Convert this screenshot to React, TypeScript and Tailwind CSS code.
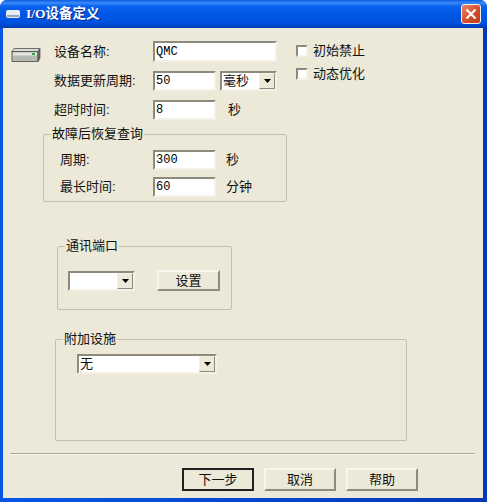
import type { ReactNode } from "react";

const ui = "font-['Liberation_Sans','Noto_Sans_CJK_SC',sans-serif] text-[13px] leading-[14px] text-[#111]";
const mono = "font-['Liberation_Mono','Noto_Sans_CJK_SC',monospace] text-[12px] leading-[14px] text-black";
const sunken = "border-2 border-t-[#8d8b7e] border-l-[#8d8b7e] border-r-[#f4f2e8] border-b-[#f4f2e8] bg-white";

function Field({ value, width, height = 20 }: { value?: string; width: number; height?: number }) {
  return (
    <div className={`${sunken} ${mono} flex items-center pl-px`} style={{ width, height }}>
      {value}
    </div>
  );
}

function Combo({ value, width }: { value?: string; width: number }) {
  return (
    <div className={`${sunken} ${ui} flex h-5 items-center justify-between pl-px`} style={{ width }}>
      <span>{value}</span>
      <span className="flex h-4 w-4 items-center justify-center border border-t-[#f4f2e8] border-l-[#f4f2e8] border-r-[#8d8b7e] border-b-[#8d8b7e] bg-[#ece9d8]">
        <svg width="7" height="4" viewBox="0 0 7 4">
          <path d="M0 0h7L3.5 4z" fill="#000" />
        </svg>
      </span>
    </div>
  );
}

function Btn({ label, width, height = 23, active }: { label: string; width: number; height?: number; active?: boolean }) {
  return (
    <div
      className={`${ui} flex items-center justify-center ${
        active
          ? "border-2 border-t-[#222] border-l-[#222] border-r-[#222] border-b-[#222] bg-[#ece9d8]"
          : "border-2 border-t-[#f7f5ec] border-l-[#f7f5ec] border-r-[#8d8b7e] border-b-[#8d8b7e] bg-[#ece9d8]"
      }`}
      style={{ width, height }}
    >
      {label}
    </div>
  );
}

function Group({ title, className, children }: { title: string; className: string; children: ReactNode }) {
  return (
    <div className={`rounded-[2px] border border-[#c4c1ab] ${className}`}>
      <div className={`${ui} -mt-[8px] ml-[7px] h-[14px] w-fit bg-[#ece9d8] px-px`}>{title}</div>
      {children}
    </div>
  );
}

function Check({ label }: { label: string }) {
  return (
    <div className="flex h-[14px] items-center">
      <span className={`${sunken} h-3 w-3`} />
      <span className={`${ui} ml-[5px]`}>{label}</span>
    </div>
  );
}

export default function App() {
  return (
    <div className="h-[502px] w-[487px] overflow-hidden rounded-t-[7px] bg-[linear-gradient(90deg,#0757e6,#0338b8)]">
      {/* title bar */}
      <div className="flex h-7 items-center bg-[linear-gradient(180deg,#0a5ae4_0px,#3b8cf8_3px,#0a62ee_6px,#0056e6_14px,#0053e0_22px,#0045c8_26px,#003aae_28px)] pl-[6px] pr-[6px]">
        <svg width="14" height="8" viewBox="0 0 14 8">
          <rect x="0" y="0" width="14" height="8" rx="2" fill="#e8edf5" />
          <rect x="1" y="5" width="12" height="2" fill="#9aa6b8" />
        </svg>
        <span className="ml-[6px] pt-px font-['Liberation_Serif','Noto_Sans_CJK_SC',serif] text-[13.5px] font-bold text-white [text-shadow:1px_1px_0_#0a2f96]">
          I/O设备定义
        </span>
        <span className="ml-auto flex h-5 w-5 items-center justify-center rounded-[3px] border border-[#f4f0ea] bg-[linear-gradient(135deg,#e8876a,#d8522e_50%,#b83a1c)]">
          <svg width="12" height="12" viewBox="0 0 12 12">
            <path d="M1.5 1.5l9 9M10.5 1.5l-9 9" stroke="#fff" strokeWidth="2.2" fill="none" />
          </svg>
        </span>
      </div>

      {/* dialog body */}
      <div className="ml-[3px] h-[470px] w-[480px] bg-[#ece9d8] pt-[13px]">
        <div className="flex">
          <div className="w-[51px] shrink-0 pl-[8px] pt-[6px]">
            <svg width="30" height="16" viewBox="0 0 30 16">
              <path d="M3 1.5h26l-2 3H1z" fill="#d9dcd4" stroke="#555" strokeWidth="0.8" />
              <rect x="1" y="4.5" width="26" height="10" fill="#b6b9b0" stroke="#4a4a4a" strokeWidth="0.8" />
              <rect x="2" y="5.5" width="24" height="3" fill="#e3e5de" />
              <path d="M27 4.5l2-3v10l-2 3z" fill="#6e716a" stroke="#444" strokeWidth="0.6" />
              <rect x="21" y="6" width="3" height="2" fill="#2fa84a" />
            </svg>
          </div>
          <div className="flex flex-col gap-[9px]">
            <div className={`${ui} flex items-center`}>
              <span className="w-[99px]">设备名称:</span>
              <Field value="QMC" width={124} height={21} />
            </div>
            <div className={`${ui} flex items-center`}>
              <span className="w-[99px]">数据更新周期:</span>
              <Field value="50" width={63} />
              <div className="ml-1">
                <Combo value="毫秒" width={57} />
              </div>
            </div>
            <div className={`${ui} flex items-center`}>
              <span className="w-[99px]">超时时间:</span>
              <Field value="8" width={63} />
              <span className="ml-3">秒</span>
            </div>
          </div>
          <div className="ml-[19px] flex flex-col gap-[9px] pt-[3px]">
            <Check label="初始禁止" />
            <Check label="动态优化" />
          </div>
        </div>

        <Group title="故障后恢复查询" className="ml-[40px] mt-[14px] h-[68px] w-[244px]">
          <div className={`${ui} ml-[16px] mt-[9px] flex flex-col gap-[7px]`}>
            <div className="flex items-center">
              <span className="w-[93px]">周期:</span>
              <Field value="300" width={63} />
              <span className="ml-[10px]">秒</span>
            </div>
            <div className="flex items-center">
              <span className="w-[93px]">最长时间:</span>
              <Field value="60" width={63} />
              <span className="ml-[10px]">分钟</span>
            </div>
          </div>
        </Group>

        <Group title="通讯端口" className="ml-[54px] mt-[44px] h-[64px] w-[175px]">
          <div className="ml-[10px] mt-[17px] flex items-center">
            <Combo width={67} />
            <div className="ml-[22px]">
              <Btn label="设置" width={63} height={21} />
            </div>
          </div>
        </Group>

        <Group title="附加设施" className="ml-[52px] mt-[29px] h-[102px] w-[352px]">
          <div className="ml-[21px] mt-[8px]">
            <Combo value="无" width={140} />
          </div>
        </Group>

        <div className="ml-[7px] mt-[12px] h-[2px] w-[465px] border-t border-b border-t-[#aca899] border-b-[#f7f5ec]" />

        <div className="ml-[179px] mt-[13px] flex gap-[10px]">
          <Btn label="下一步" width={72} active />
          <Btn label="取消" width={72} />
          <Btn label="帮助" width={72} />
        </div>
      </div>
    </div>
  );
}
